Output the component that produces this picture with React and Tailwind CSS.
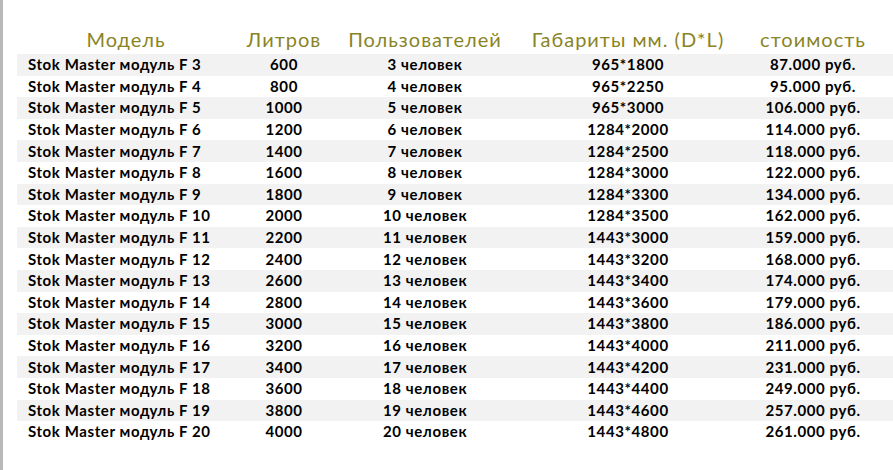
import React from 'react';

const rows = [
  ['3', '600', '965*1800', '87.000'],
  ['4', '800', '965*2250', '95.000'],
  ['5', '1000', '965*3000', '106.000'],
  ['6', '1200', '1284*2000', '114.000'],
  ['7', '1400', '1284*2500', '118.000'],
  ['8', '1600', '1284*3000', '122.000'],
  ['9', '1800', '1284*3300', '134.000'],
  ['10', '2000', '1284*3500', '162.000'],
  ['11', '2200', '1443*3000', '159.000'],
  ['12', '2400', '1443*3200', '168.000'],
  ['13', '2600', '1443*3400', '174.000'],
  ['14', '2800', '1443*3600', '179.000'],
  ['15', '3000', '1443*3800', '186.000'],
  ['16', '3200', '1443*4000', '211.000'],
  ['17', '3400', '1443*4200', '231.000'],
  ['18', '3600', '1443*4400', '249.000'],
  ['19', '3800', '1443*4600', '257.000'],
  ['20', '4000', '1443*4800', '261.000'],
];

const cols = 'grid grid-cols-[218px_98px_184px_222px_148px_6px]';

export default function App() {
  return (
    <div className="w-[893px] h-[470px] bg-white flex font-['Lato','Open_Sans',sans-serif]">
      {/* sheet edge */}
      <div className="w-[3px] bg-[#b9b9b9]" />
      <div className="flex-1 pl-[14px] pt-[29px]">
        <div className={`${cols} h-[25px] items-end text-[20px] leading-none font-normal tracking-[1px] text-[#8a8425] pb-[5px]`}>
          <div className="text-center">Модель</div>
          <div className="text-center">Литров</div>
          <div className="text-center">Пользователей</div>
          <div className="text-center">Габариты мм. (D*L)</div>
          <div className="text-center">стоимость</div>
          <div />
        </div>
        {rows.map(([n, litres, size, price], i) => (
          <div
            key={n}
            className={`${cols} h-[21.6px] items-center text-[15px] tracking-[0.6px] font-bold text-black leading-none ${
              i % 2 === 0 ? 'bg-[#f2f2f2]' : 'bg-white'
            }`}
          >
            <div className="pl-[11px] whitespace-nowrap">Stok Master модуль F {n}</div>
            <div className="text-center">{litres}</div>
            <div className="text-center whitespace-nowrap">{n} человек</div>
            <div className="text-center">{size}</div>
            <div className="text-center whitespace-nowrap">{price} руб.</div>
            <div />
          </div>
        ))}
      </div>
    </div>
  );
}
